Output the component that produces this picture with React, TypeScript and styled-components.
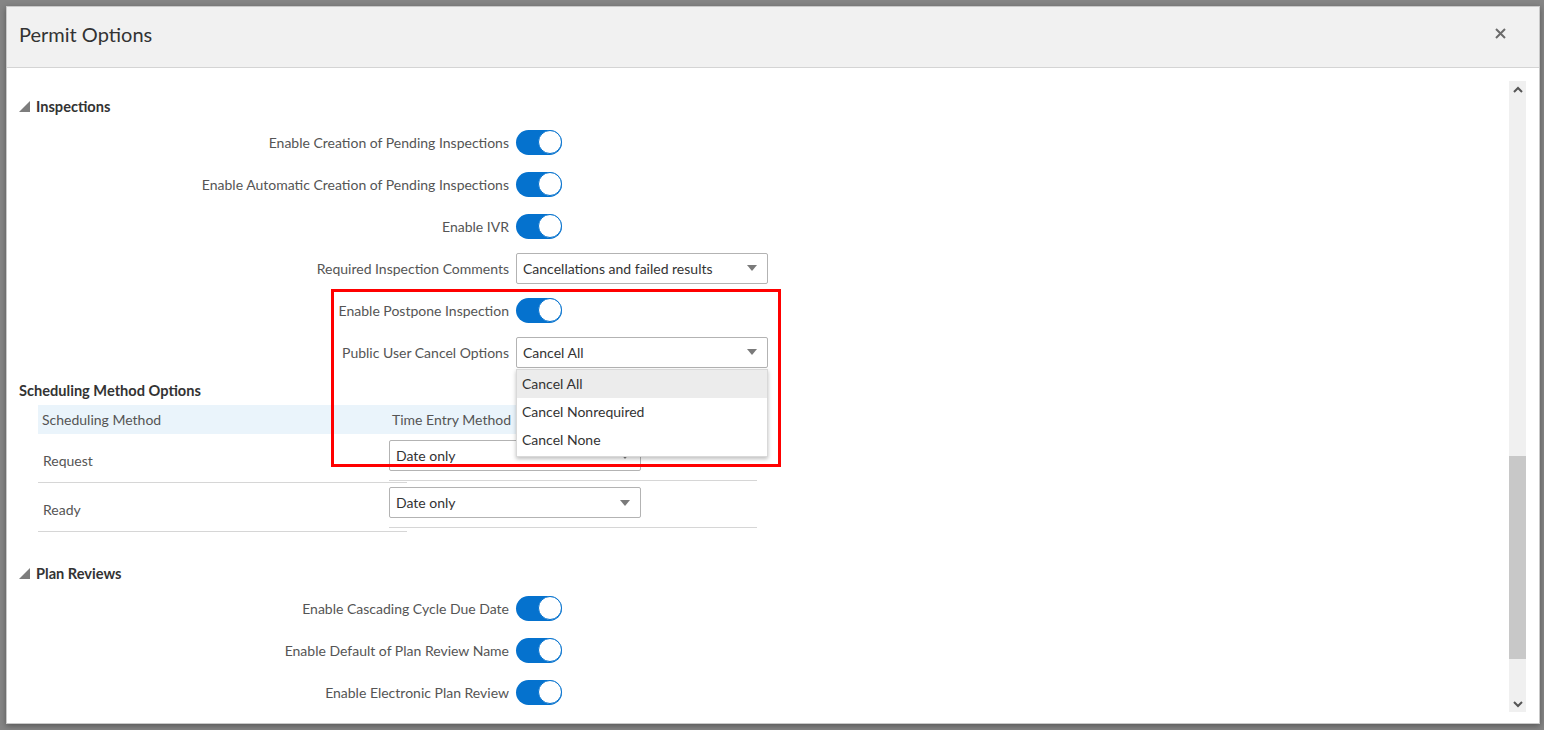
import React from "react";
import styled, { createGlobalStyle } from "styled-components";

const GlobalStyle = createGlobalStyle`
  html, body {
    margin: 0;
    padding: 0;
    height: 100%;
    overflow: hidden;
    background: #858585;
    font-family: Lato, "Open Sans", "Liberation Sans", sans-serif;
  }
  * { box-sizing: border-box; }
`;

const Page = styled.div`
  position: relative;
  width: 1544px;
  height: 730px;
`;

const Dialog = styled.div`
  position: absolute;
  left: 6px;
  top: 6px;
  width: 1534px;
  height: 718px;
  background: #fff;
  border: 1px solid #c9c9c9;
  box-shadow: 0 2px 6px rgba(0, 0, 0, 0.35);
  display: flex;
  flex-direction: column;
`;

const Header = styled.div`
  height: 61px;
  flex: none;
  background: #f1f1f1;
  border-bottom: 1px solid #d4d4d4;
  display: flex;
  align-items: center;
  justify-content: space-between;
  padding: 0 33px 7px 12px;
`;

const Title = styled.h1`
  margin: 0;
  font-size: 20px;
  font-weight: 400;
  color: #333;
`;

const CloseButton = styled.button`
  border: 0;
  background: none;
  padding: 0;
  width: 12px;
  height: 12px;
  display: flex;
  align-items: center;
  justify-content: center;
  cursor: pointer;
`;

const Body = styled.div`
  flex: 1;
  display: flex;
  min-height: 0;
`;

const Content = styled.div`
  position: relative;
  flex: 1;
  overflow: hidden;
  padding-top: 28px;
`;

const ScrollTrack = styled.div`
  width: 17px;
  flex: none;
  margin: 13px 13px 11px 0;
  background: #f0f0f0;
  display: flex;
  flex-direction: column;
  align-items: center;
`;

const ScrollArrow = styled.div`
  height: 16px;
  width: 17px;
  display: flex;
  align-items: center;
  justify-content: center;
  flex: none;
`;

const ScrollThumb = styled.div`
  width: 17px;
  height: 203px;
  background: #c8c8c8;
  margin-top: auto;
  margin-bottom: 37px;
`;

const SectionHeading = styled.div<{ $top?: number }>`
  display: flex;
  align-items: center;
  gap: 6px;
  height: 20px;
  margin-top: ${(p) => p.$top ?? 0}px;
  padding-left: 12px;
  font-size: 14.6px;
  font-weight: 700;
  color: #333;
`;

const Rows = styled.div<{ $top: number }>`
  margin-top: ${(p) => p.$top}px;
`;

const FormRow = styled.div`
  display: grid;
  grid-template-columns: 502px auto;
  column-gap: 7px;
  align-items: center;
  height: 42px;
`;

const Label = styled.label`
  text-align: right;
  font-size: 14px;
  color: #555;
  white-space: nowrap;
  padding-top: 1px;
`;

const Control = styled.div`
  position: relative;
  display: flex;
  align-items: center;
`;

const ToggleTrack = styled.button`
  width: 46px;
  height: 25px;
  padding: 0;
  border: 0;
  border-radius: 13px;
  background: #0572ce;
  display: flex;
  align-items: center;
  justify-content: flex-end;
  cursor: pointer;
`;

const ToggleKnob = styled.span`
  width: 24px;
  height: 24px;
  border-radius: 50%;
  background: #fff;
  border: 1px solid #0572ce;
`;

const SelectBox = styled.div<{ $width: number }>`
  width: ${(p) => p.$width}px;
  height: 31px;
  border: 1px solid #b3b3b3;
  border-radius: 2px;
  background: #fff;
  display: flex;
  align-items: center;
  justify-content: space-between;
  padding: 0 10px 0 6px;
  font-size: 14px;
  color: #333;
`;

const Caret = styled.span`
  width: 0;
  height: 0;
  border-left: 5px solid transparent;
  border-right: 5px solid transparent;
  border-top: 6px solid #7a7a7a;
`;

const Menu = styled.ul`
  position: absolute;
  left: 0;
  top: calc(100% + 1px);
  width: 252px;
  margin: 0;
  padding: 0 0 2px;
  list-style: none;
  background: #fff;
  border: 1px solid #d9d9d9;
  box-shadow: 0 2px 4px rgba(0, 0, 0, 0.25);
  z-index: 5;
`;

const MenuItem = styled.li<{ $active?: boolean }>`
  height: 28px;
  display: flex;
  align-items: center;
  padding-left: 5px;
  font-size: 14px;
  color: #333;
  background: ${(p) => (p.$active ? "#ececec" : "transparent")};
`;

const Table = styled.div`
  margin: 5px 0 0 31px;
  width: 719px;
`;

const TableHead = styled.div`
  display: flex;
  height: 29px;
  align-items: center;
  background: #eaf4fb;
  font-size: 14px;
  color: #555;
`;

const HeadCell = styled.div<{ $width?: number; $pad: number }>`
  width: ${(p) => (p.$width ? `${p.$width}px` : "auto")};
  padding-left: ${(p) => p.$pad}px;
`;

const TableBody = styled.div`
  display: flex;
  align-items: flex-start;
`;

const NameColumn = styled.div`
  width: 369px;
  flex: none;
`;

const ValueColumn = styled.div`
  width: 368px;
  flex: none;
  margin-left: -18px;
`;

const NameCell = styled.div`
  height: 49px;
  padding: 17px 0 0 5px;
  line-height: 20px;
  border-bottom: 1px solid #d6d6d6;
  font-size: 14px;
  color: #555;
`;

const ValueCell = styled.div`
  height: 47px;
  padding-top: 6px;
  border-bottom: 1px solid #d6d6d6;
`;

const Highlight = styled.div`
  position: absolute;
  left: 324px;
  top: 221px;
  width: 450px;
  height: 178px;
  border: 3px solid #ff0000;
  pointer-events: none;
  z-index: 6;
`;

const Toggle = () => (
  <ToggleTrack type="button" aria-pressed="true">
    <ToggleKnob />
  </ToggleTrack>
);

const Select = ({ value, width = 252 }: { value: string; width?: number }) => (
  <SelectBox $width={width}>
    <span>{value}</span>
    <Caret />
  </SelectBox>
);

const Disclosure = () => (
  <svg width="11" height="11" viewBox="0 0 11 11">
    <polygon points="0,11 11,0 11,11" fill="#7d7d7d" />
  </svg>
);

const inspectionToggles = [
  "Enable Creation of Pending Inspections",
  "Enable Automatic Creation of Pending Inspections",
  "Enable IVR",
];

const planToggles = [
  "Enable Cascading Cycle Due Date",
  "Enable Default of Plan Review Name",
  "Enable Electronic Plan Review",
];

const scheduling = [
  { method: "Request", entry: "Date only" },
  { method: "Ready", entry: "Date only" },
];

export default function App() {
  return (
    <Page>
      <GlobalStyle />
      <Dialog role="dialog">
        <Header>
          <Title>Permit Options</Title>
          <CloseButton aria-label="Close">
            <svg width="11" height="11" viewBox="0 0 11 11">
              <path d="M1 1 L10 10 M10 1 L1 10" stroke="#6b6b6b" strokeWidth="2" />
            </svg>
          </CloseButton>
        </Header>
        <Body>
          <Content>
            <SectionHeading>
              <Disclosure />
              Inspections
            </SectionHeading>
            <Rows $top={5}>
              {inspectionToggles.map((t) => (
                <FormRow key={t}>
                  <Label>{t}</Label>
                  <Control>
                    <Toggle />
                  </Control>
                </FormRow>
              ))}
              <FormRow>
                <Label>Required Inspection Comments</Label>
                <Control>
                  <Select value="Cancellations and failed results" />
                </Control>
              </FormRow>
              <FormRow>
                <Label>Enable Postpone Inspection</Label>
                <Control>
                  <Toggle />
                </Control>
              </FormRow>
              <FormRow>
                <Label>Public User Cancel Options</Label>
                <Control>
                  <Select value="Cancel All" />
                  <Menu>
                    <MenuItem $active>Cancel All</MenuItem>
                    <MenuItem>Cancel Nonrequired</MenuItem>
                    <MenuItem>Cancel None</MenuItem>
                  </Menu>
                </Control>
              </FormRow>
            </Rows>

            <SectionHeading $top={7}>Scheduling Method Options</SectionHeading>
            <Table>
              <TableHead>
                <HeadCell $width={351} $pad={4}>
                  Scheduling Method
                </HeadCell>
                <HeadCell $pad={3}>Time Entry Method</HeadCell>
              </TableHead>
              <TableBody>
                <NameColumn>
                  {scheduling.map((r) => (
                    <NameCell key={r.method}>{r.method}</NameCell>
                  ))}
                </NameColumn>
                <ValueColumn>
                  {scheduling.map((r) => (
                    <ValueCell key={r.method}>
                      <Select value={r.entry} />
                    </ValueCell>
                  ))}
                </ValueColumn>
              </TableBody>
            </Table>

            <SectionHeading $top={31}>
              <Disclosure />
              Plan Reviews
            </SectionHeading>
            <Rows $top={4}>
              {planToggles.map((t) => (
                <FormRow key={t}>
                  <Label>{t}</Label>
                  <Control>
                    <Toggle />
                  </Control>
                </FormRow>
              ))}
            </Rows>

            <Highlight />
          </Content>
          <ScrollTrack>
            <ScrollArrow>
              <svg width="10" height="7" viewBox="0 0 10 7">
                <path d="M1 6 L5 2 L9 6" fill="none" stroke="#555" strokeWidth="2" />
              </svg>
            </ScrollArrow>
            <ScrollThumb />
            <ScrollArrow>
              <svg width="10" height="7" viewBox="0 0 10 7">
                <path d="M1 1 L5 5 L9 1" fill="none" stroke="#555" strokeWidth="2" />
              </svg>
            </ScrollArrow>
          </ScrollTrack>
        </Body>
      </Dialog>
    </Page>
  );
}
